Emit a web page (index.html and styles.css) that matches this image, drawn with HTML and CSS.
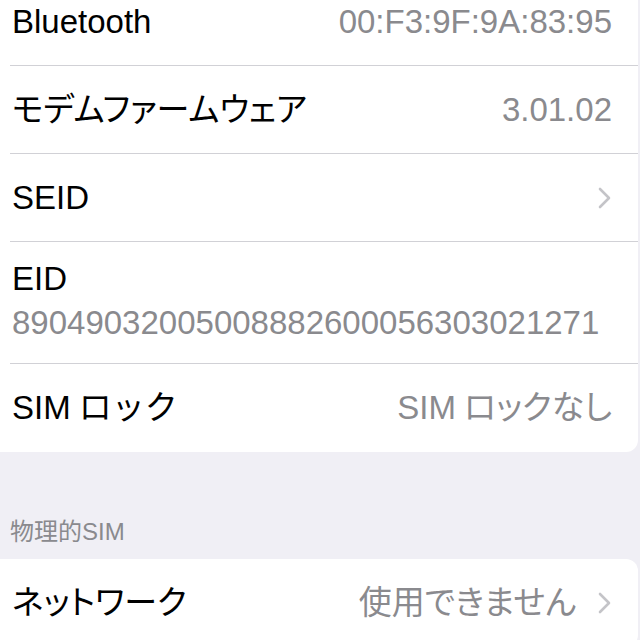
FILE: index.html
```html
<!DOCTYPE html>
<html lang="ja">
<head>
  <meta charset="UTF-8">
  <meta name="viewport" content="width=device-width, initial-scale=1.0">
  <title>情報</title>
  <link rel="stylesheet" href="styles.css">
</head>
<body>
  <div class="screen">
    <div class="group">
      <div class="row">
        <span class="label">Bluetooth</span>
        <span class="value">00:F3:9F:9A:83:95</span>
      </div>
      <div class="row">
        <span class="label ja">モデムファームウェア</span>
        <span class="value">3.01.02</span>
      </div>
      <div class="row">
        <span class="label">SEID</span>
        <svg class="chevron" width="14" height="22" viewBox="0 0 14 22"><path d="M2 2 L11 11 L2 20" /></svg>
      </div>
      <div class="row row-tall">
        <span class="label">EID</span>
        <span class="value value-below">89049032005008882600056303021271</span>
      </div>
      <div class="row">
        <span class="label">SIM<span class="sim-kana">ロック</span></span>
        <span class="value">SIM<span class="sim-kana ja">ロックなし</span></span>
      </div>
    </div>

    <div class="section-header">物理的SIM</div>

    <div class="group">
      <div class="row">
        <span class="label ja">ネットワーク</span>
        <span class="value ja">使用できません</span>
        <svg class="chevron chevron-gap" width="14" height="22" viewBox="0 0 14 22"><path d="M2 2 L11 11 L2 20" /></svg>
      </div>
    </div>
  </div>
</body>
</html>
```

FILE: styles.css
```css
body {
  margin: 0;
  padding: 0;
  background-color: #f0eff5;
  font-family: "Liberation Sans", "Noto Sans CJK JP", sans-serif;
  overflow: hidden;
}
.screen {
  margin-top: -22px;
}
.group {
  background-color: #fff;
  margin-left: -20px;
  margin-right: 2px;
  padding-left: 30px;
  border-radius: 12px;
}
.row {
  display: flex;
  align-items: center;
  height: 88px;
  box-sizing: border-box;
  padding-left: 2px;
  padding-right: 26px;
  border-bottom: 1px solid #d1d1d6;
}
.row:last-child {
  border-bottom: none;
}
.row-tall {
  height: 122px;
  flex-direction: column;
  align-items: flex-start;
  justify-content: flex-start;
  padding-top: 19px;
  gap: 8px;
}
.label {
  font-size: 33px;
  line-height: 36px;
  color: #000;
}
.value {
  margin-left: auto;
  font-size: 33px;
  line-height: 36px;
  color: #8a8a8e;
}
.value-below {
  margin-left: 0;
}
.ja {
  font-feature-settings: "palt";
}
.sim-kana {
  margin-left: 8px;
}
.chevron {
  margin-left: auto;
  fill: none;
  stroke: #c4c4c8;
  stroke-width: 2.6;
  stroke-linecap: round;
  stroke-linejoin: round;
}
.chevron-gap {
  margin-left: 22px;
}
.section-header {
  height: 107px;
  display: flex;
  align-items: flex-end;
  box-sizing: border-box;
  padding-left: 10px;
  padding-bottom: 13px;
  font-size: 24px;
  line-height: 28px;
  color: #8a8a8e;
}
```
